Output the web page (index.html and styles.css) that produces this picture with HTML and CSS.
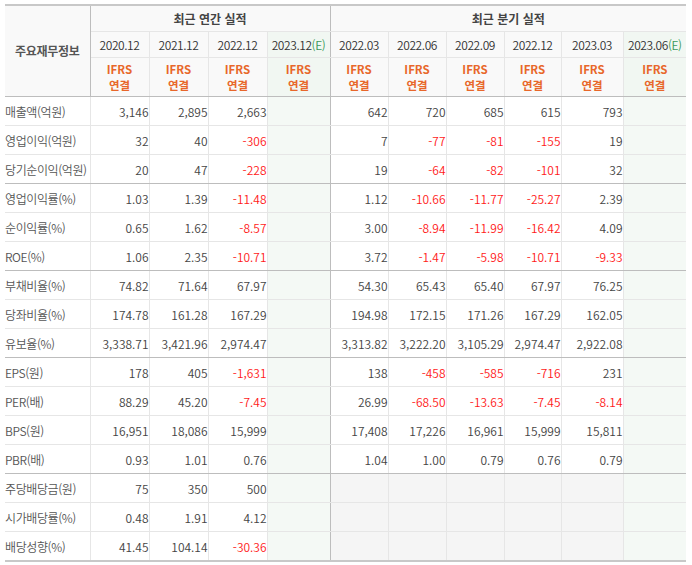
FILE: index.html
```html
<!DOCTYPE html>
<html lang="ko">
<head>
<meta charset="utf-8">
<link rel="stylesheet" href="styles.css">
</head>
<body>
<table class="fin">
<colgroup>
<col class="c-label">
<col class="c-a"><col class="c-a"><col class="c-a"><col class="c-ae">
<col class="c-q"><col class="c-q"><col class="c-q"><col class="c-q4"><col class="c-q5"><col class="c-qe">
</colgroup>
<thead>
<tr class="h1">
<th rowspan="3" class="lab-h">주요재무정보</th>
<th colspan="4" class="grp gsep">최근 연간 실적</th>
<th colspan="6" class="grp">최근 분기 실적</th>
</tr>
<tr class="h2">
<th>2020.12</th><th>2021.12</th><th>2022.12</th><th class="est gsep">2023.12<span class="e">(E)</span></th>
<th>2022.03</th><th>2022.06</th><th>2022.09</th><th>2022.12</th><th>2023.03</th><th class="est">2023.06<span class="e">(E)</span></th>
</tr>
<tr class="h3">
<th class="ifrs">IFRS<br>연결</th><th class="ifrs">IFRS<br>연결</th><th class="ifrs">IFRS<br>연결</th><th class="ifrs est gsep">IFRS<br>연결</th>
<th class="ifrs">IFRS<br>연결</th><th class="ifrs">IFRS<br>연결</th><th class="ifrs">IFRS<br>연결</th><th class="ifrs">IFRS<br>연결</th><th class="ifrs">IFRS<br>연결</th><th class="ifrs est">IFRS<br>연결</th>
</tr>
</thead>
<tbody>
<tr><th>매출액(억원)</th><td>3,146</td><td>2,895</td><td>2,663</td><td class="est gsep"></td><td>642</td><td>720</td><td>685</td><td>615</td><td>793</td><td class="est"></td></tr>
<tr><th>영업이익(억원)</th><td>32</td><td>40</td><td class="neg">-306</td><td class="est gsep"></td><td>7</td><td class="neg">-77</td><td class="neg">-81</td><td class="neg">-155</td><td>19</td><td class="est"></td></tr>
<tr class="gend"><th>당기순이익(억원)</th><td>20</td><td>47</td><td class="neg">-228</td><td class="est gsep"></td><td>19</td><td class="neg">-64</td><td class="neg">-82</td><td class="neg">-101</td><td>32</td><td class="est"></td></tr>
<tr><th>영업이익률(%)</th><td>1.03</td><td>1.39</td><td class="neg">-11.48</td><td class="est gsep"></td><td>1.12</td><td class="neg">-10.66</td><td class="neg">-11.77</td><td class="neg">-25.27</td><td>2.39</td><td class="est"></td></tr>
<tr><th>순이익률(%)</th><td>0.65</td><td>1.62</td><td class="neg">-8.57</td><td class="est gsep"></td><td>3.00</td><td class="neg">-8.94</td><td class="neg">-11.99</td><td class="neg">-16.42</td><td>4.09</td><td class="est"></td></tr>
<tr class="gend"><th>ROE(%)</th><td>1.06</td><td>2.35</td><td class="neg">-10.71</td><td class="est gsep"></td><td>3.72</td><td class="neg">-1.47</td><td class="neg">-5.98</td><td class="neg">-10.71</td><td class="neg">-9.33</td><td class="est"></td></tr>
<tr><th>부채비율(%)</th><td>74.82</td><td>71.64</td><td>67.97</td><td class="est gsep"></td><td>54.30</td><td>65.43</td><td>65.40</td><td>67.97</td><td>76.25</td><td class="est"></td></tr>
<tr><th>당좌비율(%)</th><td>174.78</td><td>161.28</td><td>167.29</td><td class="est gsep"></td><td>194.98</td><td>172.15</td><td>171.26</td><td>167.29</td><td>162.05</td><td class="est"></td></tr>
<tr class="gend"><th>유보율(%)</th><td>3,338.71</td><td>3,421.96</td><td>2,974.47</td><td class="est gsep"></td><td>3,313.82</td><td>3,222.20</td><td>3,105.29</td><td>2,974.47</td><td>2,922.08</td><td class="est"></td></tr>
<tr><th>EPS(원)</th><td>178</td><td>405</td><td class="neg">-1,631</td><td class="est gsep"></td><td>138</td><td class="neg">-458</td><td class="neg">-585</td><td class="neg">-716</td><td>231</td><td class="est"></td></tr>
<tr><th>PER(배)</th><td>88.29</td><td>45.20</td><td class="neg">-7.45</td><td class="est gsep"></td><td>26.99</td><td class="neg">-68.50</td><td class="neg">-13.63</td><td class="neg">-7.45</td><td class="neg">-8.14</td><td class="est"></td></tr>
<tr><th>BPS(원)</th><td>16,951</td><td>18,086</td><td>15,999</td><td class="est gsep"></td><td>17,408</td><td>17,226</td><td>16,961</td><td>15,999</td><td>15,811</td><td class="est"></td></tr>
<tr class="gend"><th>PBR(배)</th><td>0.93</td><td>1.01</td><td>0.76</td><td class="est gsep"></td><td>1.04</td><td>1.00</td><td>0.79</td><td>0.76</td><td>0.79</td><td class="est"></td></tr>
<tr><th>주당배당금(원)</th><td>75</td><td>350</td><td>500</td><td class="est gsep"></td><td class="na"></td><td class="na"></td><td class="na"></td><td class="na"></td><td class="na"></td><td class="est"></td></tr>
<tr><th>시가배당률(%)</th><td>0.48</td><td>1.91</td><td>4.12</td><td class="est gsep"></td><td class="na"></td><td class="na"></td><td class="na"></td><td class="na"></td><td class="na"></td><td class="est"></td></tr>
<tr class="last"><th>배당성향(%)</th><td>41.45</td><td>104.14</td><td class="neg">-30.36</td><td class="est gsep"></td><td class="na"></td><td class="na"></td><td class="na"></td><td class="na"></td><td class="na"></td><td class="est"></td></tr>
</tbody>
</table>
</body>
</html>
```
FILE: styles.css
```css
html, body {
  margin: 0;
  padding: 0;
  background: #fff;
}
body {
  padding: 4px 6px 0 5px;
  font-family: "Noto Sans CJK KR", "Noto Sans", sans-serif;
  font-size: 12px;
  font-weight: 350;
  color: #333;
}
.fin {
  border-collapse: collapse;
  table-layout: fixed;
  width: 681px;
  border-top: 2px solid #c8c8c8;
}
.c-label { width: 85px; }
.c-a { width: 59px; }
.c-ae { width: 63px; }
.c-q { width: 58px; }
.c-q4 { width: 57px; }
.c-q5 { width: 62px; }
.c-qe { width: 63px; }

.fin th, .fin td {
  border: 1px solid #e6e6e6;
  padding: 0;
  overflow: hidden;
  white-space: nowrap;
}
.fin tr > *:first-child { border-left: none; }
.fin tr > *:last-child { border-right: none; }

thead th {
  background: #f9f9f9;
  font-weight: 350;
  color: #333;
  text-align: center;
  line-height: 14px;
}
thead .h1 th { height: 25px; }
thead .h1 .grp { font-weight: bold; color: #444; }
thead .h2 th { height: 25px; letter-spacing: -0.4px; }
thead .h3 th { height: 38px; border-bottom: 1px solid #bdbdbd; }
thead .lab-h {
  font-weight: bold;
  color: #555;
  letter-spacing: -0.3px;
  border-right: 1px solid #bdbdbd;
  border-bottom: 1px solid #bdbdbd;
}
.fin thead th.ifrs {
  color: #e8672a;
  font-weight: bold;
  line-height: 16px;
  font-size: 11.5px;
}
.e { color: #3b9a5a; }
thead th.est { background: #f1f7f2; }

tbody th {
  text-align: left;
  font-weight: 350;
  color: #555;
  padding-left: 5px;
  height: 28px;
  border-right: 1px solid #bdbdbd;
  letter-spacing: -0.4px;
}
tbody td {
  text-align: right;
  padding-right: 6px;
  color: #444;
  height: 28px;
}
tbody td.neg { color: #ff1a1a; }
tbody td.est { background: #f4f9f5; }
tbody td.na { background: #f5f5f5; }
.fin .gsep { border-right: 1px solid #bdbdbd; }
tbody tr.gend th, tbody tr.gend td { border-bottom: 1px solid #bdbdbd; }
tbody tr.last th, tbody tr.last td { border-bottom: 2px solid #c8c8c8; }
```
